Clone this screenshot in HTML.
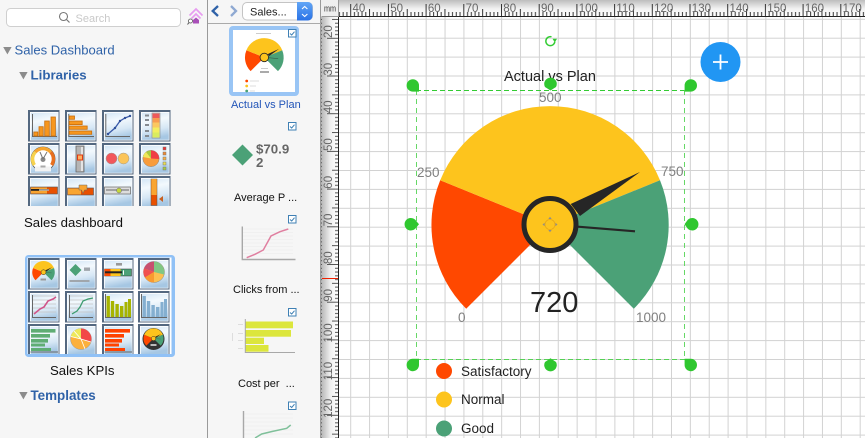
<!DOCTYPE html>
<html><head><meta charset="utf-8"><style>
html,body{margin:0;padding:0;width:865px;height:438px;overflow:hidden;background:#fff}
svg{display:block;font-family:"Liberation Sans",Arial,sans-serif}
</style></head><body>
<svg width="865" height="438" viewBox="0 0 865 438" xmlns="http://www.w3.org/2000/svg">
<defs>
<linearGradient id="cb" x1="0" y1="0" x2="0.2" y2="1"><stop offset="0" stop-color="#d4e6f5"/><stop offset=".35" stop-color="#f3f9fd"/><stop offset=".7" stop-color="#d6e7f5"/><stop offset="1" stop-color="#a6c7e3"/></linearGradient>
<linearGradient id="rt" x1="0" y1="0" x2="0" y2="1"><stop offset="0" stop-color="#bdbdbd"/><stop offset=".55" stop-color="#f2f2f2"/><stop offset="1" stop-color="#fff"/></linearGradient>
<linearGradient id="rl" x1="0" y1="0" x2="1" y2="0"><stop offset="0" stop-color="#b4b4b4"/><stop offset=".55" stop-color="#efefef"/><stop offset="1" stop-color="#fff"/></linearGradient>
<linearGradient id="sel" x1="0" y1="0" x2="0" y2="1"><stop offset="0" stop-color="#62a6f6"/><stop offset="1" stop-color="#2a72e6"/></linearGradient>
<pattern id="gx" patternUnits="userSpaceOnUse" x="350.2" y="0" width="18.87" height="20"><rect width="1" height="20" fill="#d2d2d2"/></pattern>
<pattern id="gy" patternUnits="userSpaceOnUse" x="0" y="18.8" width="20" height="18.9"><rect width="20" height="1" fill="#d2d2d2"/></pattern>
<pattern id="tx" patternUnits="userSpaceOnUse" x="350.2" y="0" width="37.7" height="17"><g fill="#333"><rect x="0" y="4" width="1" height="12"/><rect x="3.77" y="12" width="1" height="4"/><rect x="7.54" y="12" width="1" height="4"/><rect x="11.31" y="12" width="1" height="4"/><rect x="15.08" y="12" width="1" height="4"/><rect x="18.85" y="9" width="1" height="7"/><rect x="22.62" y="12" width="1" height="4"/><rect x="26.39" y="12" width="1" height="4"/><rect x="30.16" y="12" width="1" height="4"/><rect x="33.93" y="12" width="1" height="4"/></g></pattern>
<pattern id="ty" patternUnits="userSpaceOnUse" x="0" y="37.8" width="17" height="37.7"><g fill="#555"><rect x="4" y="0" width="12" height="1"/><rect x="12" y="3.77" width="4" height="1"/><rect x="12" y="7.54" width="4" height="1"/><rect x="12" y="11.31" width="4" height="1"/><rect x="12" y="15.08" width="4" height="1"/><rect x="9" y="18.85" width="7" height="1"/><rect x="12" y="22.62" width="4" height="1"/><rect x="12" y="26.39" width="4" height="1"/><rect x="12" y="30.16" width="4" height="1"/><rect x="12" y="33.93" width="4" height="1"/></g></pattern>
<g id="c">
<rect x="0" y="0" width="31.5" height="31.5" fill="#546880"/>
<rect x="2" y="2" width="28.5" height="28.5" fill="#fff"/>
<rect x="2.8" y="2.8" width="27" height="27" fill="url(#cb)"/>
</g>
<g id="c2">
<rect width="31.5" height="30" fill="#546880"/>
<rect x="2" y="2" width="28.5" height="28" fill="#fff"/>
<rect x="2.8" y="2.8" width="27" height="27.2" fill="url(#cb)"/>
</g>
<g id="gauge">
<path d="M550,225 L466.2,308.8 A118.5,118.5 0 0 1 440.2,180.3Z" fill="#ff4800"/>
<path d="M550,225 L440.2,180.3 A118.5,118.5 0 0 1 660,180.3Z" fill="#fdc41d"/>
<path d="M550,225 L660,180.3 A118.5,118.5 0 0 1 633.8,308.8Z" fill="#4ba177"/>
<path d="M570.7,204 L640,172 L580,216Z" fill="#262626"/>
<path d="M578,226.7 L635,231.3" stroke="#262626" stroke-width="2.2" fill="none"/>
<circle cx="550" cy="224.5" r="26" fill="#fdc41d" stroke="#262626" stroke-width="5"/>
</g>
<path id="drop" d="M6,12H12V6A6.2,6.2 0 1 0 6,12Z" fill="#2fc72f"/>
<g id="chk"><rect x=".5" y=".5" width="7.5" height="7.5" fill="#fff" stroke="#3f80b4"/><path d="M2,4.5L3.7,6L6.5,2.7" stroke="#3f80b4" fill="none"/></g>
<path id="tri" d="M0,0H8.4L4.2,7.4Z" fill="#8c8c8c"/>
</defs>

<!-- panels -->
<rect width="865" height="438" fill="#fff"/>
<rect x="0" y="0" width="207" height="438" fill="#f6f6f6"/>
<rect x="207" y="0" width="1" height="438" fill="#9a9a9a"/>
<rect x="208" y="0" width="113" height="438" fill="#f6f6f6"/>
<rect x="320" y="0" width="1.2" height="438" fill="#9a9a9a"/>
<rect x="208" y="23" width="113" height="1" fill="#aaa"/>

<!-- search -->
<rect x="6.5" y="8.5" width="174" height="18" rx="4" fill="#fff" stroke="#cfcfcf"/>
<circle cx="63.5" cy="16.5" r="4" fill="none" stroke="#777" stroke-width="1.1"/>
<path d="M66.5,19.5L69.5,22.5" stroke="#777" stroke-width="1.2"/>
<text x="75.5" y="22" font-size="11" fill="#c9c9c9">Search</text>
<path d="M189.5,15.5L196,9L202.5,15.5M191.5,18.5L196,14L200.5,18.5" fill="none" stroke="#e79df0" stroke-width="1.7"/>
<path d="M193,20L196,17.5L199,20V23.5H193Z" fill="#a94fb8"/>
<circle cx="190.5" cy="21" r="2" fill="#fff" stroke="#555" stroke-width=".8"/><path d="M189,22.5L187.5,24.5" stroke="#555"/>

<!-- tree -->
<use href="#tri" x="3.2" y="47"/>
<text x="14.5" y="54.3" font-size="13.05" fill="#2f62a8">Sales Dashboard</text>
<use href="#tri" x="19.2" y="72"/>
<text x="30.5" y="79.5" font-size="13.3" font-weight="bold" fill="#2f62a8">Libraries</text>
<text x="24" y="227" font-size="13.2" fill="#111">Sales dashboard</text>
<rect x="25" y="255" width="150" height="102" rx="3.5" fill="#90c1f6"/>
<rect x="27.5" y="257.5" width="144" height="96.5" fill="#fff"/>
<text x="50" y="375" font-size="13.2" fill="#111">Sales KPIs</text>
<use href="#tri" x="19.2" y="392"/>
<text x="30.5" y="400" font-size="13.4" font-weight="bold" fill="#2f62a8">Templates</text>

<!-- library 1 -->
<g transform="translate(28,110)"><use href="#c"/><path d="M4.5,4V26.5H29" stroke="#666" fill="none"/><g fill="#f6971f" stroke="#c96f0c" stroke-width=".8"><rect x="5.8" y="22" width="4" height="4"/><rect x="11" y="16.7" width="4.2" height="9.3"/><rect x="16.7" y="11" width="4.6" height="15"/><rect x="23" y="7" width="4.4" height="19"/></g></g>
<g transform="translate(65,110)"><use href="#c"/><path d="M3.8,4V26.5H29" stroke="#666" fill="none"/><g fill="#f6971f" stroke="#c96f0c" stroke-width=".8"><rect x="4.2" y="6" width="5.3" height="3.3"/><rect x="4.2" y="11" width="13" height="3.6"/><rect x="4.2" y="16" width="18" height="3.3"/><rect x="4.2" y="21" width="22.5" height="3.3"/></g></g>
<g transform="translate(102,110)"><use href="#c"/><path d="M3.8,4V26.5H28" stroke="#666" fill="none"/><path d="M6,24L13,18L18,11L23,8L28,6" stroke="#3a5aa8" stroke-width="1.3" fill="none"/><g fill="#2f4f98"><circle cx="6" cy="24" r="1.2"/><circle cx="13" cy="18" r="1.2"/><circle cx="18" cy="11" r="1.2"/><circle cx="23" cy="8" r="1.2"/><circle cx="28" cy="6" r="1.2"/></g></g>
<g transform="translate(139,110)"><use href="#c"/><g fill="#858a90"><rect x="6" y="4.5" width="4" height="2"/><rect x="6" y="9" width="4" height="2"/><rect x="6" y="14" width="4" height="2"/><rect x="6" y="20" width="4" height="2"/><rect x="6" y="25" width="4" height="2"/></g><rect x="13" y="3" width="8" height="25" fill="#eee" stroke="#888" stroke-width=".6"/><rect x="13.5" y="3.5" width="7" height="4.5" fill="#ee5a5a"/><rect x="13.5" y="8" width="7" height="4.5" fill="#f89c50"/><rect x="13.5" y="12.5" width="7" height="5" fill="#fbc860"/><rect x="13.5" y="17.5" width="7" height="5" fill="#f3ee60"/><rect x="13.5" y="22.5" width="7" height="5" fill="#d9ec60"/></g>

<g transform="translate(28,143)"><use href="#c"/><circle cx="15" cy="16" r="12" fill="#fff" stroke="#555" stroke-width=".8"/><path d="M15,16L5,23A12,12 0 0 1 6,8Z" fill="#f6d24e"/><path d="M15,16L6,8A12,12 0 0 1 24,8Z" fill="#f6a52f"/><path d="M15,16L24,8A12,12 0 0 1 25,23Z" fill="#e8701f"/><circle cx="15" cy="16" r="8.7" fill="#fff"/><circle cx="15" cy="16.5" r="2.5" fill="#888"/><path d="M15,16L12,9M15,16L19,9" stroke="#777"/><rect x="7" y="23.5" width="16" height="5" fill="#f2f2f2"/><rect x="12.5" y="22.5" width="5" height="2" fill="#aaa"/></g>
<g transform="translate(65,143)"><use href="#c"/><rect x="11" y="3" width="8" height="26" fill="#b5b5b5" stroke="#666" stroke-width=".8"/><rect x="16" y="4" width="2" height="24" fill="#e4e4e4"/><rect x="12.5" y="12" width="5" height="5" fill="#ffb060" stroke="#e03a10" stroke-width="1"/></g>
<g transform="translate(102,143)"><use href="#c"/><circle cx="9.5" cy="15.5" r="5.5" fill="#f2575b" stroke="#999" stroke-width=".5"/><circle cx="21.5" cy="15.5" r="5.5" fill="#fbc55a" stroke="#999" stroke-width=".5"/></g>
<g transform="translate(139,143)"><use href="#c"/><circle cx="12" cy="15.5" r="8.2" fill="#f89c3c" stroke="#888" stroke-width=".5"/><path d="M12,15.5V7.5A8,8 0 0 1 20,16Z" fill="#ef3f45"/><path d="M12,15.5L7,9A8,8 0 0 1 12,7.5Z" fill="#a8cc40"/><path d="M12,15.5L4,14A8,8 0 0 1 7,9Z" fill="#f0e85a"/><g stroke="#777" stroke-width=".5"><rect x="24" y="4" width="3" height="3" fill="#e33"/><rect x="24" y="9" width="3" height="3" fill="#f08a30"/><rect x="24" y="14" width="3" height="3" fill="#f9b040"/><rect x="24" y="19" width="3" height="3" fill="#eee050"/><rect x="24" y="24" width="3" height="3" fill="#a8cc40"/></g></g>

<g transform="translate(28,176)"><use href="#c2"/><rect x="2.5" y="11" width="27" height="7" fill="#e85000" stroke="#555" stroke-width=".6"/><rect x="3" y="11.5" width="16" height="6" fill="#f9a531"/><rect x="3" y="13" width="18" height="1.8" fill="#222"/><rect x="11" y="13.5" width="10" height="1" fill="#fff"/></g>
<g transform="translate(65,176)"><use href="#c2"/><rect x="2.5" y="12" width="26" height="7" fill="#e85000" stroke="#555" stroke-width=".6"/><rect x="3" y="12.5" width="13" height="6" fill="#f9a531"/><path d="M14,9H22V14H19.5L18,17.5L16.5,14H14Z" fill="#f9a531" stroke="#666" stroke-width=".5"/></g>
<g transform="translate(102,176)"><use href="#c2"/><rect x="2.5" y="11" width="26" height="7" fill="#ddd" stroke="#666" stroke-width=".7"/><path d="M4,14H27" stroke="#666"/><circle cx="17" cy="14.5" r="2.5" fill="#c5d83c" stroke="#667" stroke-width=".5"/></g>
<g transform="translate(139,176)"><use href="#c2"/><rect x="12" y="3" width="6" height="26.5" fill="#e85000" stroke="#555" stroke-width=".5"/><rect x="12.3" y="3" width="5.5" height="16" fill="#f9a531"/><path d="M20,23L24,20V26Z" fill="#c86020"/></g>

<!-- KPIs -->
<g transform="translate(28,258)"><use href="#c"/><g transform="translate(15.5,14.3) scale(.095) translate(-550,-225)"><use href="#gauge"/></g><rect x="12.5" y="20.5" width="5.5" height="2" fill="#999"/></g>
<g transform="translate(65,258)"><use href="#c"/><path d="M10.5,6L16.5,12L10.5,18L4.5,12Z" fill="#4ba177"/><rect x="19" y="9.5" width="6" height="3.4" fill="#a0a6ac"/><rect x="4.5" y="22" width="20" height="2" fill="#a0a6ac"/></g>
<g transform="translate(102,258)"><use href="#c"/><rect x="14" y="5" width="6" height="2.6" fill="#999"/><rect x="2.5" y="11" width="27" height="7" fill="#4ba177" stroke="#333" stroke-width=".5"/><rect x="2.5" y="11" width="16" height="7" fill="#fdc41d"/><rect x="2.5" y="11" width="6" height="7" fill="#ff4800"/><rect x="3" y="13.3" width="17" height="2" fill="#222"/><rect x="21" y="12.3" width="1" height="4.5" fill="#fff"/></g>
<g transform="translate(138,258)"><use href="#c"/><circle cx="16" cy="14" r="10.5" fill="#fcc050" stroke="#888" stroke-width=".5"/><path d="M16,14V3.5A10.5,10.5 0 0 1 26,16.5Z" fill="#81c784"/><path d="M16,14L6,10.5A10.5,10.5 0 0 1 16,3.5Z" fill="#c85070"/><path d="M16,14L6,10.5A10.5,10.5 0 0 0 7,19.5Z" fill="#f05050"/><path d="M16,14L7,19.5A10.5,10.5 0 0 0 16,24.5Z" fill="#f99a30"/></g>

<g transform="translate(28,291)"><use href="#c"/><path d="M5,5H28M5,9H28M5,13H28M5,17H28M5,21H28" stroke="#c4c4c4" stroke-width=".8"/><path d="M4.5,4V26.5H28" stroke="#666" fill="none"/><path d="M6,23L12,18L16,16L20,10L25,8L28,6" stroke="#d0558a" stroke-width="1.6" fill="none"/></g>
<g transform="translate(65,291)"><use href="#c"/><path d="M5,5H28M5,9H28M5,13H28M5,17H28M5,21H28" stroke="#c4c4c4" stroke-width=".8"/><path d="M4.5,4V26.5H28" stroke="#666" fill="none"/><path d="M7,23L12,20L15,16L18,10L23,8L28,7" stroke="#3c9c70" stroke-width="1.3" fill="none"/></g>
<g transform="translate(102,291)"><use href="#c"/><path d="M3.5,3V26.5H29" stroke="#666" fill="none"/><g fill="#a7b400"><rect x="4.5" y="5" width="3.4" height="21"/><rect x="8.8" y="10" width="3.4" height="16"/><rect x="13.4" y="13" width="3.4" height="13"/><rect x="18" y="15" width="3.4" height="11"/><rect x="22.5" y="11" width="3" height="15"/><rect x="26" y="8" width="3" height="18"/></g></g>
<g transform="translate(138,291)"><use href="#c"/><path d="M3.5,3V26.5H29" stroke="#666" fill="none"/><g fill="#84afd0"><rect x="4.5" y="5" width="3.4" height="21"/><rect x="8.8" y="10" width="3.4" height="16"/><rect x="13.4" y="14" width="3.4" height="12"/><rect x="18" y="16" width="3.4" height="10"/><rect x="22.5" y="11" width="3" height="15"/><rect x="26" y="8" width="3" height="18"/></g></g>

<g transform="translate(28,324)"><use href="#c2"/><g fill="#5fad74"><rect x="3" y="5" width="24.5" height="3.6"/><rect x="3" y="10" width="19" height="3.6"/><rect x="3" y="15" width="17" height="3.6"/><rect x="3" y="19.5" width="14" height="3"/><rect x="3" y="24" width="20" height="3"/></g><path d="M2.5,28H30" stroke="#666"/></g>
<g transform="translate(65,324)"><use href="#c2"/><circle cx="16" cy="15" r="10.5" fill="#fcb03c" stroke="#999" stroke-width=".5"/><path d="M16,15V4.5A10.5,10.5 0 0 1 26,18Z" fill="#f24848"/><path d="M16,15L5.8,12.5A10.5,10.5 0 0 1 16,4.5Z" fill="#eee85a"/><path d="M16,15L5.8,12.5M16,15L9,7M16,15L20,25M16,15L26,18" stroke="#fff" stroke-width=".8"/></g>
<g transform="translate(102,324)"><use href="#c2"/><g fill="#ff4200"><rect x="3" y="5" width="25" height="3.6"/><rect x="3" y="10" width="19" height="3.6"/><rect x="3" y="15" width="17" height="3.6"/><rect x="3" y="19.5" width="14" height="3"/><rect x="3" y="24" width="20" height="3"/></g><path d="M2.5,28H30" stroke="#666"/></g>
<g transform="translate(138,324)"><use href="#c2"/><circle cx="15.5" cy="15" r="11" fill="#333"/><g transform="translate(15.5,14.5) scale(.085) translate(-550,-225)"><use href="#gauge"/></g><rect x="12.5" y="20" width="6" height="2" fill="#bbb"/></g>

<!-- middle toolbar -->
<path d="M218,6L212.7,11L218,16" fill="none" stroke="#2f62a8" stroke-width="2.3"/>
<path d="M231,6L236,11L231,16" fill="none" stroke="#8fa9d2" stroke-width="2.3"/>
<rect x="242.5" y="2.5" width="70" height="17.5" rx="4.5" fill="#fff" stroke="#c4c4c4"/>
<path d="M297,2H308a4.5,4.5 0 0 1 4.5,4.5V16a4.5,4.5 0 0 1 -4.5,4.5H297Z" fill="url(#sel)"/>
<path d="M302,9L304.7,6.5L307.4,9M302,14L304.7,16.5L307.4,14" fill="none" stroke="#fff" stroke-width="1.1"/>
<text x="250" y="15.5" font-size="11" fill="#222">Sales...</text>

<!-- thumb 1 -->
<rect x="229" y="26" width="70" height="70" rx="4" fill="#99c5f5"/>
<rect x="233" y="30" width="62" height="62" fill="#fff"/>
<g transform="translate(264.3,57.5) scale(.163) translate(-550,-225)"><use href="#gauge"/></g>
<rect x="256" y="33" width="15" height="1" fill="#ccc"/>
<rect x="261" y="68" width="7" height="1" fill="#ccc"/><rect x="260" y="71" width="9" height="2" fill="#aaa"/>
<circle cx="246.7" cy="81" r="1.4" fill="#ff4800"/><circle cx="246.7" cy="86" r="1.4" fill="#fdc41d"/><circle cx="246.7" cy="91" r="1.4" fill="#4ba177"/>
<rect x="250" y="80.5" width="9" height="1" fill="#ddd"/><rect x="250" y="85.5" width="6" height="1" fill="#ddd"/><rect x="250" y="90.5" width="5" height="1" fill="#ddd"/>
<use href="#chk" x="288" y="29"/>
<text x="231" y="108" font-size="11" fill="#2255b8">Actual vs Plan</text>

<!-- thumb 2 -->
<use href="#chk" x="288" y="122"/>
<path d="M242.5,144.5L253,155L242.5,165.5L232,155Z" fill="#4ba177"/>
<text x="256" y="153.5" font-size="13.3" font-weight="bold" fill="#666">$70.9</text>
<text x="256" y="167" font-size="13.3" font-weight="bold" fill="#666">2</text>
<text x="234" y="201" font-size="11" fill="#111">Average P ...</text>

<!-- thumb 3 -->
<use href="#chk" x="288" y="215"/>
<path d="M243,229H293M243,232.5H293M243,236H293M243,239.5H293M243,243H293M243,246.5H293M243,250H293M243,253.5H293" stroke="#f0f0f0"/>
<path d="M242.3,226.5V259.5H295.5" fill="none" stroke="#a8a8a8" stroke-width="1.4"/>
<path d="M246.7,257.7L255,254.3L263.3,250L271,236L280,231.7L288.3,229" fill="none" stroke="#e07fa0" stroke-width="1.5"/>
<text x="233" y="293" font-size="11" fill="#111">Clicks from ...</text>

<!-- thumb 4 -->
<use href="#chk" x="288" y="308"/>
<g fill="#dce63c"><rect x="245.5" y="321.5" width="47.5" height="6.8"/><rect x="245.5" y="330" width="45.5" height="6.7"/><rect x="245.5" y="337.7" width="18.5" height="6.3"/><rect x="245.5" y="345" width="23" height="6.7"/></g>
<path d="M245.3,319V352.5H295" fill="none" stroke="#a8a8a8"/>
<g fill="#ddd"><rect x="238" y="324" width="5" height="1"/><rect x="238" y="333" width="5" height="1"/><rect x="238" y="340" width="5" height="1"/><rect x="238" y="348" width="5" height="1"/><rect x="232" y="333" width="1" height="8"/></g>
<text x="238" y="387" font-size="11" fill="#111" style="white-space:pre">Cost per  ...</text>

<!-- thumb 5 -->
<use href="#chk" x="288" y="401.5"/>
<path d="M243,414H293M243,418H293M243,422H293M243,426H293M243,430H293M243,434H293" stroke="#f0f0f0"/>
<path d="M243.5,411V438" fill="none" stroke="#a8a8a8" stroke-width="1.4"/>
<path d="M255,438L261.7,434L272,431.5L286.7,428.3L290.7,425" fill="none" stroke="#7fc09a" stroke-width="1.5"/>

<!-- canvas -->
<rect x="339" y="17" width="526" height="421" fill="#fff"/>
<rect x="339" y="17" width="526" height="421" fill="url(#gx)"/>
<rect x="339" y="17" width="526" height="421" fill="url(#gy)"/>

<!-- rulers -->
<rect x="339" y="0" width="526" height="16" fill="url(#rt)"/>
<rect x="339" y="0" width="526" height="17" fill="url(#tx)"/>
<rect x="339" y="16" width="526" height="1" fill="#222"/>
<rect x="321" y="17" width="17" height="421" fill="url(#rl)"/>
<rect x="321" y="17" width="17" height="421" fill="url(#ty)"/>
<rect x="338" y="17" width="1" height="421" fill="#222"/>
<rect x="321" y="0" width="18" height="17" fill="#efefef"/>
<path d="M321.5,16.5H338.5V0" fill="none" stroke="#999"/>
<rect x="322" y="278" width="16" height="1" fill="#f02000"/>
<text x="324" y="11.5" font-size="9" fill="#333" textLength="12" lengthAdjust="spacingAndGlyphs">mm</text>
<g font-size="11.5" fill="#666">
<text x="352.5" y="12">40</text><text x="390.2" y="12">50</text><text x="427.9" y="12">60</text><text x="465.6" y="12">70</text><text x="503.3" y="12">80</text><text x="541" y="12">90</text><text x="578.7" y="12">100</text><text x="616.4" y="12">110</text><text x="654.1" y="12">120</text><text x="691.8" y="12">130</text><text x="729.5" y="12">140</text><text x="767.2" y="12">150</text><text x="804.9" y="12">160</text><text x="842.6" y="12">170</text>
</g>
<g font-size="11.5" fill="#666">
<text transform="translate(332,38) rotate(-90)">20</text><text transform="translate(332,75.6) rotate(-90)">30</text><text transform="translate(332,113.3) rotate(-90)">40</text><text transform="translate(332,151) rotate(-90)">50</text><text transform="translate(332,188.7) rotate(-90)">60</text><text transform="translate(332,226.4) rotate(-90)">70</text><text transform="translate(332,264.1) rotate(-90)">80</text><text transform="translate(332,301.8) rotate(-90)">90</text><text transform="translate(332,342.5) rotate(-90)">100</text><text transform="translate(332,380.2) rotate(-90)">110</text><text transform="translate(332,417.9) rotate(-90)">120</text>
</g>

<!-- gauge -->
<use href="#gauge"/>
<g fill="#8d8d8d"><path d="M548.3,219H551.7L550,216.8Z"/><path d="M548.3,230H551.7L550,232.2Z"/><path d="M544.7,222.8V226.2L542.5,224.5Z"/><path d="M555.3,222.8V226.2L557.5,224.5Z"/></g>
<circle cx="550" cy="224.5" r="5" fill="none" stroke="#e8a818" stroke-width=".8"/>

<text x="504" y="81" font-size="14.5" fill="#222">Actual vs Plan</text>
<g font-size="13.5" fill="#808080">
<text x="539" y="102">500</text><text x="417" y="177">250</text><text x="661" y="176">750</text><text x="458" y="322">0</text><text x="636" y="322">1000</text>
</g>
<text x="530" y="312" font-size="29" fill="#222">720</text>

<circle cx="444" cy="371" r="8" fill="#ff4800"/><circle cx="444" cy="399.5" r="8" fill="#fdc41d"/><circle cx="444" cy="428.5" r="8" fill="#4ba177"/>
<g font-size="13.5" fill="#222"><text x="461" y="376">Satisfactory</text><text x="461" y="404">Normal</text><text x="461" y="433">Good</text></g>

<!-- selection -->
<path d="M416,90.5H685" stroke="#33cc33" stroke-dasharray="5 3" fill="none"/>
<path d="M416,359.5H685" stroke="#55d055" stroke-dasharray="5 3" fill="none"/>
<path d="M416.5,90V359M684.5,90V359" stroke="#66d866" stroke-dasharray="5 4" fill="none"/>
<use href="#drop" x="407" y="79.6"/>
<g transform="translate(696.6,79.6) scale(-1,1)"><use href="#drop"/></g>
<g transform="translate(407,370.8) scale(1,-1)"><use href="#drop"/></g>
<g transform="translate(696.6,370.8) scale(-1,-1)"><use href="#drop"/></g>
<path d="M545,87A6.3,6.3 0 1 1 556,87L550.5,90.5Z" fill="#2fc72f"/>
<path d="M545,362A6.3,6.3 0 1 0 556,362L550.5,358.2Z" fill="#2fc72f"/>
<path d="M415,219.5A6.3,6.3 0 1 0 415,229L419,224.3Z" fill="#2fc72f"/>
<path d="M688,219.5A6.3,6.3 0 1 1 688,229L684.5,224.3Z" fill="#2fc72f"/>
<path d="M551.5,36.8A4.5,4.5 0 1 0 554.8,41.8" fill="none" stroke="#33cc33" stroke-width="1.5"/>
<path d="M552.5,38.8L557,38.8L554.8,42.5Z" fill="#33cc33"/>

<!-- plus -->
<circle cx="720.5" cy="62" r="20" fill="#2196f3"/>
<path d="M713,62H728M720.5,54.5V69.5" stroke="#fff" stroke-width="1.8"/>
</svg>
</body></html>
